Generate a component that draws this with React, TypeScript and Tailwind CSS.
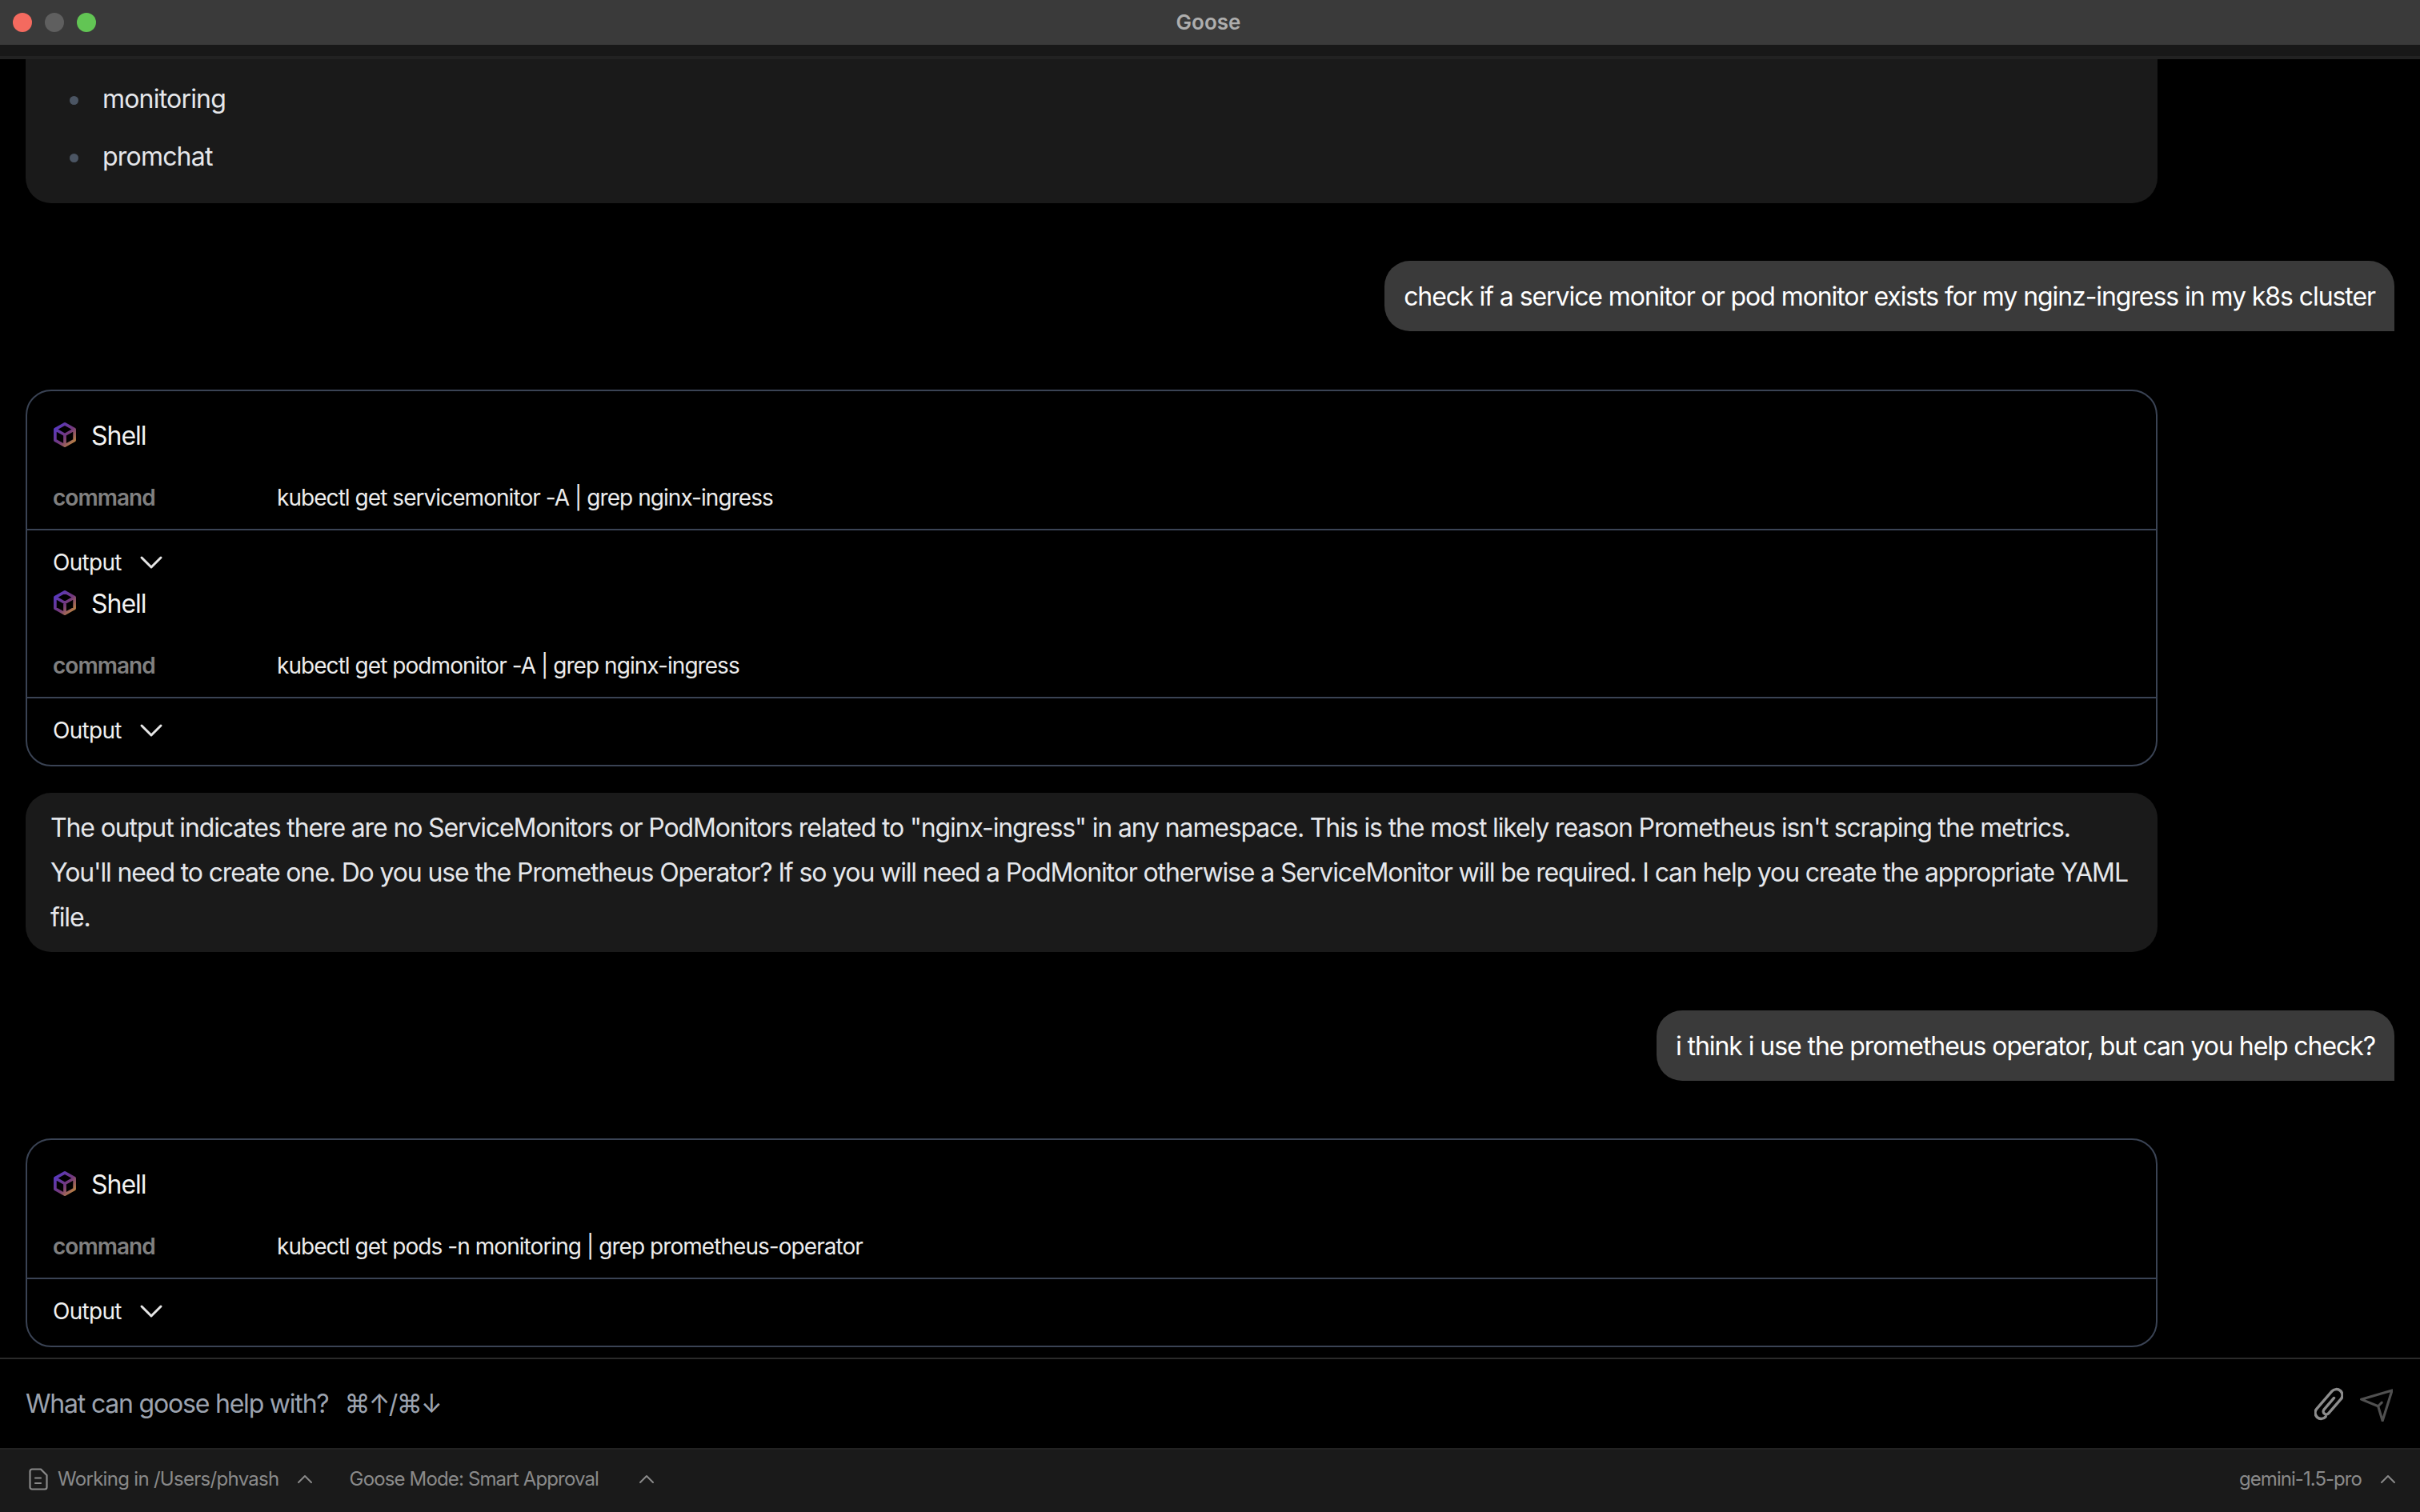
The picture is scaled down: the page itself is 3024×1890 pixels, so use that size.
import React from "react";
import { ChevronDown, ChevronUp } from "lucide-react";

function Cube() {
  return (
    <svg width="30" height="31" viewBox="0 0 30 32" fill="none" className="shrink-0 -translate-y-[2px]">
      <defs>
        <linearGradient id="cubeGrad" x1="2" y1="4" x2="28" y2="28" gradientUnits="userSpaceOnUse">
          <stop offset="0" stopColor="#5438c8" />
          <stop offset="0.55" stopColor="#74397c" />
          <stop offset="1" stopColor="#c48c3a" />
        </linearGradient>
      </defs>
      <path
        d="M15 2 L27.5 9 V23 L15 30 L2.5 23 V9 Z M2.5 9 L15 16 L27.5 9 M15 16 V30"
        stroke="url(#cubeGrad)"
        strokeWidth="3.8"
        strokeLinejoin="round"
      />
    </svg>
  );
}

function ToolBlock({ command, topPad }: { command: string; topPad: string }) {
  return (
    <div className={topPad}>
      <div className="flex h-[44px] items-center gap-[18px] px-8">
        <Cube />
        <span className="text-[32px] leading-[44px] tracking-[-1px] text-[#f3f3f3]">Shell</span>
      </div>
      <div className="mt-[33px] flex h-[44px] items-center px-8 text-[28px] tracking-[-0.95px]">
        <span className="w-[280px] font-semibold text-[#808080]">command</span>
        <span className="text-[#ececec]">{command}</span>
      </div>
      <div className="mt-[17px] flex h-[64px] items-center gap-[13px] border-t-2 border-[#3a4354] px-8 pt-[18px] text-[28px] tracking-[-0.7px] text-[#f0f0f0]">
        <span>Output</span>
        <ChevronDown size={48} strokeWidth={1.5} className="text-[#e5e5e5]" />
      </div>
    </div>
  );
}

function UserBubble({ children }: { children: React.ReactNode }) {
  return (
    <div className="flex justify-end">
      <div className="rounded-t-[32px] rounded-bl-[32px] bg-[#3a3a3a] px-6 pb-[19px] pt-[21px] text-[32px] leading-[48px] tracking-[-1.07px] text-white">
        {children}
      </div>
    </div>
  );
}

export default function App() {
  return (
    <div
      className="flex h-[1890px] w-[3024px] flex-col overflow-hidden bg-black"
      style={{ fontFamily: "Inter, 'Liberation Sans', sans-serif" }}
    >
      <div className="grid h-14 shrink-0 grid-cols-[1fr_auto_1fr] items-center bg-[#3a3a3a] pl-4 pr-5">
        <div className="flex gap-4">
          <div className="h-6 w-6 rounded-full bg-[#f46a5f]" />
          <div className="h-6 w-6 rounded-full bg-[#5f5f5f]" />
          <div className="h-6 w-6 rounded-full bg-[#62c554]" />
        </div>
        <div className="-translate-y-[1px] text-[26px] font-semibold text-[#aeaeae]">Goose</div>
        <div />
      </div>
      <div className="h-[18px] shrink-0 border-b-4 border-[#222222] bg-[#181818]" />

      <div className="flex min-h-0 flex-1 flex-col overflow-hidden px-8">
        <div className="w-[2664px] shrink-0 rounded-b-[32px] bg-[#1a1a1a] pb-[29px] pl-[55px] pt-[23px] text-[32px] leading-[56px] tracking-[-0.8px] text-[#e5e7eb]">
          <div className="flex items-center gap-[30px]">
            <span className="h-[11px] w-[11px] rounded-full bg-[#4b5563]" />
            <span className="-translate-y-[1px]">monitoring</span>
          </div>
          <div className="mt-4 flex items-center gap-[30px]">
            <span className="h-[11px] w-[11px] rounded-full bg-[#4b5563]" />
            <span className="-translate-y-[1px]">promchat</span>
          </div>
        </div>

        <div className="mt-[72px]">
          <UserBubble>check if a service monitor or pod monitor exists for my nginz-ingress in my k8s cluster</UserBubble>
        </div>

        <div className="mt-[73px] w-[2664px] shrink-0 rounded-[32px] border-2 border-[#3a4354] pb-[21px]">
          <ToolBlock command="kubectl get servicemonitor -A | grep nginx-ingress" topPad="pt-[34px]" />
          <ToolBlock command="kubectl get podmonitor -A | grep nginx-ingress" topPad="pt-[8px]" />
        </div>

        <div className="mt-[33px] w-[2664px] shrink-0 rounded-[32px] bg-[#1a1a1a] pb-[15px] pl-[31px] pr-[26px] pt-[16px] text-[32px] leading-[56px] tracking-[-1.13px] text-[#e5e7eb]">
          The output indicates there are no ServiceMonitors or PodMonitors related to "nginx-ingress" in any namespace. This is the most likely reason Prometheus isn't scraping the metrics. You'll need to create one. Do you use the Prometheus Operator? If so you will need a PodMonitor otherwise a ServiceMonitor will be required. I can help you create the appropriate YAML file.
        </div>

        <div className="mt-[73px]">
          <UserBubble>i think i use the prometheus operator, but can you help check?</UserBubble>
        </div>

        <div className="mt-[72px] w-[2664px] shrink-0 rounded-[32px] border-2 border-[#3a4354] pb-[21px]">
          <ToolBlock command="kubectl get pods -n monitoring | grep prometheus-operator" topPad="pt-[34px]" />
        </div>
      </div>

      <div className="flex h-[113px] shrink-0 items-center justify-between border-t-2 border-[#2a2a2a] pl-8 pr-[34px]">
        <div className="flex text-[32px] tracking-[-1.2px] text-[#9ca3af]">
          <span>What can goose help with?</span>
          <span className="ml-[20px] tracking-[-1.7px]">⌘↑/⌘↓</span>
        </div>
        <div className="flex items-center gap-[18px]">
          <svg width="36" height="42" viewBox="0 0 36 42" fill="none" stroke="#8c8c8c" strokeWidth="3.4" strokeLinecap="round" strokeLinejoin="round">
            <g transform="rotate(41 18 21)">
              <path d="M18 11 V30 A3.75 3.75 0 0 0 25.5 30 V6.5 A7.5 7.5 0 0 0 10.5 6.5 V35.5 A7.5 7.5 0 0 0 25.5 35.5" />
            </g>
          </svg>
          <svg width="44" height="44" viewBox="0 0 24 24" fill="none" stroke="#505050" strokeWidth="1.7" strokeLinejoin="round" strokeLinecap="round">
            <path d="M23.5 2.7 L17 23.5 L14 13.5 L2.5 8.8 Z" />
            <path d="M14 13.5 L16.5 11" />
          </svg>
        </div>
      </div>

      <div className="flex h-[80px] shrink-0 items-center justify-between border-t-2 border-[#222222] bg-[#1a1a1a] pb-[4px] pl-9 pr-6 text-[24px] tracking-[-0.7px] text-[#8a8a8a]">
        <div className="flex items-center">
          <svg width="24" height="28" viewBox="0 0 24 28" fill="none" stroke="#8a8a8a" strokeWidth="2.2" strokeLinejoin="round" strokeLinecap="round">
            <path d="M4 1.5 H15 L22.5 9 V24 A2.5 2.5 0 0 1 20 26.5 H4 A2.5 2.5 0 0 1 1.5 24 V4 A2.5 2.5 0 0 1 4 1.5 Z" />
            <path d="M8 12.5 H15 M8 19 H15" />
          </svg>
          <span className="ml-3">Working in /Users/phvash</span>
          <ChevronUp size={32} strokeWidth={1.5} className="ml-4" />
          <span className="ml-10 tracking-[-0.85px]">Goose Mode: Smart Approval</span>
          <ChevronUp size={32} strokeWidth={1.5} className="ml-[44px]" />
        </div>
        <div className="flex items-center">
          <span className="tracking-[-0.95px]">gemini-1.5-pro</span>
          <ChevronUp size={32} strokeWidth={1.5} className="ml-[17px]" />
        </div>
      </div>
    </div>
  );
}
